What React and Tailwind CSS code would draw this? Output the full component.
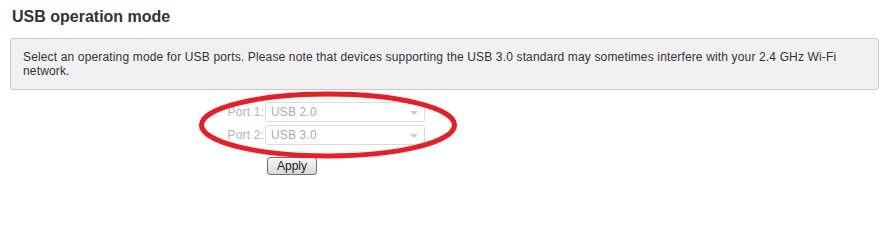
import React from "react";

const ports = [
  { id: "port1", label: "Port 1:", value: "USB 2.0" },
  { id: "port2", label: "Port 2:", value: "USB 3.0" },
];

const App = () => {
  return (
    <div className="relative w-[891px] h-[200px] bg-white px-[10px] pt-[7px] font-['Liberation_Sans',Arial,sans-serif] text-[#333]">
      {/* Heading */}
      <h2 className="pl-[2px] text-[16px] leading-[20px] font-bold text-[#333]">USB operation mode</h2>

      {/* Info box */}
      <div className="mt-[11px] w-[869px] rounded-[3px] border border-[#c8c8c8] bg-[#f1f1f1] pl-[12px] pr-[12px] pt-[11px] pb-[11px] text-[12px] leading-[14px] tracking-[0.15px] text-[#333]">
        Select an operating mode for USB ports. Please note that devices supporting the USB 3.0 standard may sometimes interfere with your 2.4 GHz Wi-Fi network.
      </div>

      {/* Port selects */}
      <div className="mt-[12px] flex flex-col gap-[3px]">
        {ports.map(({ id, label, value }) => (
          <div key={id} className="flex items-center">
            <label htmlFor={id} className="w-[255px] pr-[1px] text-right text-[12px] leading-[20px] tracking-[0.15px] text-[#b4b4b4]">
              {label}
            </label>
            <div className="relative flex h-[20px] w-[160px] items-center rounded-[2px] border border-[#dcdcdc] bg-white pl-[5px] text-[12px] tracking-[0.15px] text-[#acacac]">
              {value}
              <span className="absolute right-[6px] top-[8px] h-0 w-0 border-x-[4px] border-t-[4px] border-x-transparent border-t-[#cccccc]"></span>
            </div>
          </div>
        ))}
      </div>

      {/* Apply */}
      <button
        type="button"
        className="ml-[257px] mt-[12px] flex h-[18px] w-[50px] items-center justify-center rounded-[3px] border border-[#707070] bg-linear-to-b from-[#f6f6f6] to-[#d9d9d9] text-[12px] leading-none text-[#1a1a1a]"
      >
        Apply
      </button>

      {/* Red annotation */}
      <svg className="pointer-events-none absolute left-0 top-0" width="891" height="200">
        <ellipse cx="328" cy="125" rx="126.5" ry="31" fill="none" stroke="#ed1c24" strokeWidth="5" />
      </svg>
    </div>
  );
};

export default App;
